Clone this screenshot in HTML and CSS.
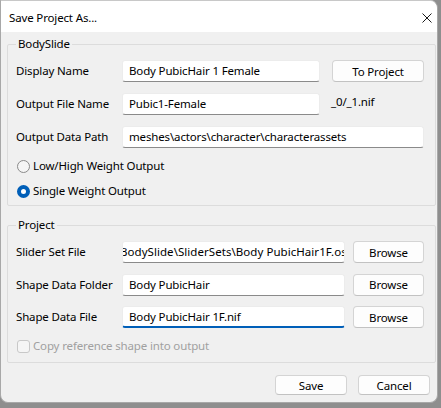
FILE: index.html
```html
<html>
<head>
  <meta charset="UTF-8">
  <title>Save Project As...</title>
  <link rel="stylesheet" href="styles.css">
</head>
<body>

  <div class="window">
    <div class="titlebar">
      <span class="title">Save Project As...</span>
      <svg class="close" width="10" height="10" viewBox="0 0 10 10">
        <path d="M0.5 0.5 L9.5 9.5 M9.5 0.5 L0.5 9.5" stroke="#1a1a1a" stroke-width="1" fill="none"/>
      </svg>
    </div>

    <div class="content">
      <fieldset class="group">
        <legend>BodySlide</legend>
        <div class="grid bodyslide">
          <label>Display Name</label>
          <div class="field">Body PubicHair 1 Female</div>
          <button>To Project</button>

          <label>Output File Name</label>
          <div class="field">Pubic1-Female</div>
          <span class="suffix">_0/_1.nif</span>

          <label>Output Data Path</label>
          <div class="field wide">meshes\actors\character\characterassets</div>
        </div>

        <div class="radio first"><span class="dot"></span>Low/High Weight Output</div>
        <div class="radio"><span class="dot checked"></span>Single Weight Output</div>
      </fieldset>

      <fieldset class="group">
        <legend>Project</legend>
        <div class="grid project">
          <label>Slider Set File</label>
          <div class="field scrolled"><span>BodySlide\SliderSets\Body PubicHair1F.osp</span></div>
          <button>Browse</button>

          <label>Shape Data Folder</label>
          <div class="field">Body PubicHair</div>
          <button>Browse</button>

          <label>Shape Data File</label>
          <div class="field focused">Body PubicHair 1F.nif</div>
          <button>Browse</button>
        </div>

        <div class="check"><span class="box"></span>Copy reference shape into output</div>
      </fieldset>

      <div class="actions">
        <button class="action">Save</button>
        <button class="action">Cancel</button>
      </div>
    </div>
  </div>

</body>
</html>
```

FILE: styles.css
```css
html {
  background: #8e8e8e;
}

body {
  margin: 0;
  font-family: 'Segoe UI', 'Noto Sans', sans-serif;
  font-size: 11.5px;
  letter-spacing: -0.15px;
  color: #000;
}

.window {
  width: 436px;
  height: 401px;
  background: #f0f0f0;
  border: 1px solid #a8a8a8;
  border-top-color: #c8c8c8;
  border-radius: 0 8px 8px 8px;
  overflow: hidden;
}

.titlebar {
  height: 31px;
  background: #fff;
  display: flex;
  align-items: center;
  justify-content: space-between;
  padding: 0 5px 0 8px;
}

.title {
  margin-top: 1px;
}

.close {
  margin-top: 2px;
}

.content {
  padding: 4px 1px 0 6px;
}

.group {
  margin: 0;
  padding: 8px 8px 4px 8px;
  border: 1px solid #dcdcdc;
  border-radius: 2px;
}

.group + .group {
  margin-top: 11px;
  padding-bottom: 6px;
}

legend {
  padding: 0 2px;
  line-height: 16px;
}

.grid {
  display: grid;
  align-items: center;
  row-gap: 11px;
}

.bodyslide {
  grid-template-columns: 94px 198px 92px;
  column-gap: 12px;
}

.project {
  grid-template-columns: 98px 223px 71px;
  column-gap: 8px;
  row-gap: 10.5px;
}

label {
  line-height: 16px;
}

.field {
  height: 22px;
  box-sizing: border-box;
  background: #fff;
  border: 1px solid #ececec;
  border-bottom-color: #8a8a8a;
  border-radius: 3px;
  padding: 0 6px;
  line-height: 20px;
  white-space: nowrap;
  overflow: hidden;
}

.field.wide {
  grid-column: 2 / 4;
}

.field.scrolled {
  padding: 0;
  letter-spacing: 0.05px;
}

.field.scrolled span {
  display: inline-block;
  margin-left: -3px;
}

.field.focused {
  border-bottom: 2px solid #005fb8;
  line-height: 19px;
}

.suffix {
  margin-top: -5px;
  margin-left: -1px;
}

button {
  height: 22px;
  font-family: inherit;
  font-size: 11.5px;
  letter-spacing: -0.15px;
  color: #000;
  background: #fdfdfd;
  border: 1px solid #d4d4d4;
  border-bottom-color: #c2c2c2;
  border-radius: 4px;
  padding: 0;
}

.radio,
.check {
  display: flex;
  align-items: center;
  height: 20px;
  line-height: 16px;
}

.radio.first {
  margin-top: 8px;
}

.radio + .radio {
  margin-top: 5px;
}

.dot {
  width: 13px;
  height: 13px;
  box-sizing: border-box;
  border: 1px solid #8a8a8a;
  border-radius: 50%;
  background: #f5f5f5;
  margin: 0 3px 0 1px;
}

.dot.checked {
  border: 4px solid #005fb8;
  background: #fff;
}

.check {
  margin-top: 8px;
  color: #a0a0a0;
}

.box {
  width: 13px;
  height: 13px;
  box-sizing: border-box;
  border: 1px solid #c8c8c8;
  border-radius: 3px;
  background: #f5f5f5;
  margin: 0 3px 0 1px;
}

.actions {
  display: flex;
  justify-content: flex-end;
  gap: 11px;
  margin-top: 12px;
  padding-right: 6px;
}

.action {
  width: 72px;
  height: 20px;
}
```
